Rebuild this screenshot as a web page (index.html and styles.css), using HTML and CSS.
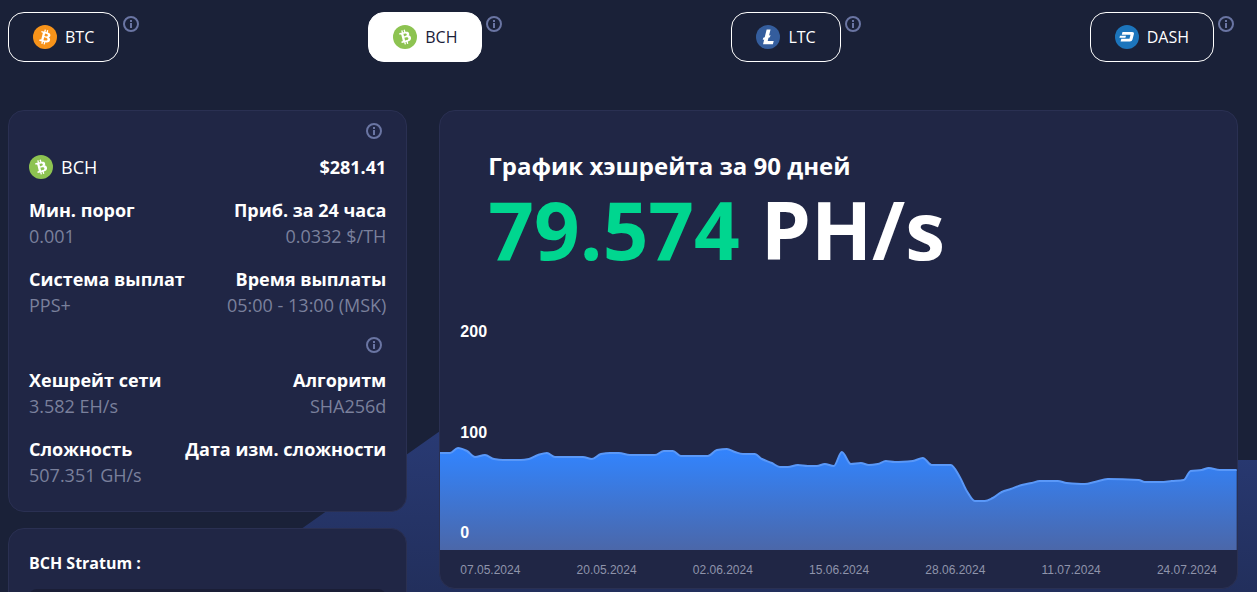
FILE: index.html
```html
<!DOCTYPE html>
<html lang="ru">
<head>
  <meta charset="UTF-8">
  <title>BCH Pool</title>
  <meta name="viewport" content="width=device-width, initial-scale=1.0">
  <link rel="stylesheet" href="styles.css">
</head>
<body>
<svg class="sprite" aria-hidden="true">
  <symbol id="info" viewBox="0 0 16 16">
    <circle cx="8" cy="8" r="7" fill="none" stroke="currentColor" stroke-width="2"/>
    <path fill="currentColor" d="M7 4h2v2H7zM7 7h2v5H7z"/>
  </symbol>
  <symbol id="bitcoin" viewBox="0 0 32 32">
    <path fill="#fff" fill-rule="evenodd" d="M23.189 14.02c.314-2.096-1.283-3.223-3.465-3.975l.708-2.84-1.728-.43-.69 2.765c-.454-.114-.92-.22-1.385-.326l.695-2.783L15.596 6l-.708 2.839c-.376-.086-.746-.17-1.104-.26l.002-.009-2.384-.595-.46 1.846s1.283.294 1.256.312c.7.175.826.638.805 1.006l-.806 3.235c.048.012.11.03.18.057l-.183-.045-1.13 4.532c-.086.212-.303.531-.793.41.018.025-1.256-.313-1.256-.313l-.858 1.978 2.25.561c.418.105.828.215 1.231.318l-.715 2.872 1.727.43.708-2.84c.472.127.93.245 1.378.357l-.706 2.828 1.728.43.715-2.866c2.948.558 5.164.333 6.097-2.333.752-2.146-.037-3.385-1.588-4.192 1.13-.26 1.98-1.003 2.207-2.538zm-3.95 5.538c-.533 2.147-4.148.986-5.32.695l.95-3.805c1.172.293 4.929.872 4.37 3.11zm.535-5.569c-.487 1.953-3.495.96-4.47.717l.86-3.45c.975.243 4.118.696 3.61 2.733z"/>
  </symbol>
  <symbol id="btc" viewBox="0 0 32 32">
    <circle cx="16" cy="16" r="16" fill="#f7931a"/>
    <use href="#bitcoin" width="32" height="32"/>
  </symbol>
  <symbol id="bch" viewBox="0 0 32 32">
    <circle cx="16" cy="16" r="16" fill="#8dc351"/>
    <use href="#bitcoin" width="32" height="32" transform="rotate(-28 16 16)"/>
  </symbol>
  <symbol id="ltc" viewBox="0 0 32 32">
    <circle cx="16" cy="16" r="16" fill="#345d9d"/>
    <path fill="#fff" d="M10.9 19.2l-1.9.7.7-2.9 1.9-.7L14.2 6h5.2l-2 8 1.9-.7-.7 2.9-1.9.7-1.1 4.4h8l-1.1 4.2H9.4z"/>
  </symbol>
  <symbol id="dash" viewBox="0 0 24 24">
    <circle cx="12" cy="12" r="12" fill="#1c75bc"/>
    <path fill="#fff" d="M7.5 7H17q2.4 0 1.9 2l-1.4 5.5q-.6 2-2.6 2H5.6l.7-2.7h8.2l1-4.1H6.8zM5 10.7h6l-.6 2H4.4z"/>
  </symbol>
</svg>

<main class="page">
  <nav class="coins">
    <div class="coin">
      <button class="coin-btn" type="button"><svg class="logo"><use href="#btc"/></svg>BTC</button>
      <svg class="info"><use href="#info"/></svg>
    </div>
    <div class="coin">
      <button class="coin-btn active" type="button"><svg class="logo"><use href="#bch"/></svg>BCH</button>
      <svg class="info"><use href="#info"/></svg>
    </div>
    <div class="coin">
      <button class="coin-btn" type="button"><svg class="logo"><use href="#ltc"/></svg>LTC</button>
      <svg class="info"><use href="#info"/></svg>
    </div>
    <div class="coin">
      <button class="coin-btn" type="button"><svg class="logo"><use href="#dash"/></svg>DASH</button>
      <svg class="info"><use href="#info"/></svg>
    </div>
  </nav>

  <div class="content">
    <div class="side">
      <section class="card stats">
        <svg class="info"><use href="#info"/></svg>
        <div class="row price">
          <span class="name"><svg class="logo"><use href="#bch"/></svg>BCH</span>
          <b>$281.41</b>
        </div>
        <div class="row">
          <div><b>Мин. порог</b><p>0.001</p></div>
          <div><b>Приб. за 24 часа</b><p>0.0332 $/TH</p></div>
        </div>
        <div class="row">
          <div><b>Система выплат</b><p>PPS+</p></div>
          <div><b>Время выплаты</b><p>05:00 - 13:00 (MSK)</p></div>
        </div>
        <svg class="info second"><use href="#info"/></svg>
        <div class="row network">
          <div><b>Хешрейт сети</b><p>3.582 EH/s</p></div>
          <div><b>Алгоритм</b><p>SHA256d</p></div>
        </div>
        <div class="row">
          <div><b>Сложность</b><p>507.351 GH/s</p></div>
          <div><b>Дата изм. сложности</b></div>
        </div>
      </section>

      <section class="card stratum">
        <label for="stratum">BCH Stratum :</label>
        <input id="stratum" type="text" readonly>
      </section>
    </div>

    <section class="card hashrate">
      <h2>График хэшрейта за 90 дней</h2>
      <p class="total"><span>79.574</span> PH/s</p>
      <div class="chart">
        <svg viewBox="0 0 797 230" preserveAspectRatio="none">
          <defs>
            <linearGradient id="fill" gradientUnits="userSpaceOnUse" x1="0" y1="128" x2="0" y2="230">
              <stop offset="0" stop-color="#3284ff"/>
              <stop offset="0.2" stop-color="#367fef"/>
              <stop offset="1" stop-color="#4b67a9"/>
            </linearGradient>
          </defs>
          <path id="area" fill="url(#fill)"/>
          <path id="line" fill="none" stroke="#5a98f8" stroke-width="2"/>
        </svg>
        <div class="levels"><span>200</span><span>100</span><span>0</span></div>
      </div>
      <div class="dates">
        <span>07.05.2024</span>
        <span>20.05.2024</span>
        <span>02.06.2024</span>
        <span>15.06.2024</span>
        <span>28.06.2024</span>
        <span>11.07.2024</span>
        <span>24.07.2024</span>
      </div>
    </section>
  </div>
</main>

<script>
  const points = [
    [0, 133], [10, 133], [18, 128], [27, 131], [35, 137], [45, 135], [54, 139], [63, 140],
    [72, 140], [81, 140], [89, 139], [98, 135], [107, 133], [115, 137], [126, 137], [143, 137],
    [152, 139], [161, 134], [170, 133], [179, 133], [190, 135], [200, 135], [215, 135], [224, 131],
    [233, 131], [241, 136], [260, 136], [268, 136], [277, 130], [287, 129], [295, 132], [303, 134],
    [315, 134], [322, 139], [332, 143], [340, 147], [348, 147], [358, 145], [368, 146], [377, 146],
    [385, 144], [394, 146], [402, 132], [411, 144], [421, 143], [429, 145], [438, 144], [446, 141],
    [455, 142], [473, 141], [483, 138], [492, 145], [511, 145], [520, 157], [527, 171], [535, 181],
    [545, 181], [553, 178], [562, 172], [571, 169], [582, 165], [592, 163], [600, 161], [618, 161],
    [627, 163], [645, 164], [655, 162], [668, 159], [699, 160], [705, 162], [721, 162], [732, 161],
    [744, 160], [751, 151], [762, 150], [769, 148], [780, 150], [797, 150]
  ];

  // slope is flat at every peak, so the curve never overshoots
  function slope(i) {
    if (i === 0 || i === points.length - 1) return 0;
    const [a, b, c] = [points[i - 1], points[i], points[i + 1]];
    const left = (b[1] - a[1]) / (b[0] - a[0]);
    const right = (c[1] - b[1]) / (c[0] - b[0]);
    return left * right <= 0 ? 0 : 2 * left * right / (left + right);
  }

  let path = `M${points[0]}`;
  for (let i = 1; i < points.length; i++) {
    const [x0, y0] = points[i - 1], [x1, y1] = points[i];
    const step = (x1 - x0) / 3;
    path += `C${x0 + step} ${y0 + slope(i - 1) * step} ${x1 - step} ${y1 - slope(i) * step} ${x1} ${y1}`;
  }
  document.getElementById("line").setAttribute("d", path);
  document.getElementById("area").setAttribute("d", path + "V230H0Z");
</script>
</body>
</html>
```
FILE: styles.css
```css
* { box-sizing: border-box; margin: 0; padding: 0; }
html { overflow: hidden; }
body {
  position: relative;
  z-index: 0;
  font-family: "Open Sans", "Noto Sans", sans-serif;
  font-size: 18px;
  line-height: 26px;
  color: #fff;
  background: #1a2138;
  height: 100vh;
  overflow: hidden;
}
body::before {
  content: "";
  position: absolute;
  z-index: -1;
  top: 400px;
  left: 212px;
  right: 0;
  height: 192px;
  background: linear-gradient(#2a3c78, #222f5c);
  clip-path: polygon(0 100%, 272px 0, 600px 60px, 100% 60px, 100% 100%);
}
.sprite {
  position: absolute;
  width: 0;
  height: 0;
}
.page {
  padding: 12px 19px 0 8px;
}
.info {
  display: block;
  flex: none;
  width: 16px;
  height: 16px;
  color: #6a75a3;
}
.logo {
  flex: none;
  width: 24px;
  height: 24px;
}

.coins {
  display: flex;
  justify-content: space-between;
  padding-right: 4px;
  margin-bottom: 48px;
}
.coin {
  display: flex;
  gap: 4px;
}
.coin .info {
  margin-top: 4px;
}
.coin-btn {
  display: flex;
  align-items: center;
  gap: 8px;
  height: 50px;
  padding: 0 24px;
  font: inherit;
  font-size: 16px;
  color: #fff;
  background: transparent;
  border: 1px solid #fff;
  border-radius: 16px;
  cursor: pointer;
}
.coin-btn.active {
  color: #1a2138;
  background: #fff;
}

.content {
  display: grid;
  grid-template-columns: 1fr 2fr;
  align-items: start;
  gap: 32px;
}
.side {
  display: grid;
  gap: 16px;
}
.card {
  background: #202645;
  border: 1px solid #2a3052;
  border-radius: 16px;
}
.stats {
  padding: 12px 20px 23px;
}
.stats .info {
  margin: 0 4px 0 auto;
}
.stats .second {
  margin-top: 19px;
}
.row {
  display: flex;
  justify-content: space-between;
  margin-top: 17px;
}
.row div:last-child {
  text-align: right;
}
.row div:last-child b {
  white-space: nowrap;
}
.row p {
  color: #7a809c;
}
.price {
  margin-top: 15px;
}
.network {
  margin-top: 14px;
}
.name {
  display: flex;
  align-items: center;
  gap: 8px;
}
.stratum {
  padding: 21px 20px;
}
.stratum label {
  display: block;
  font-size: 16px;
  font-weight: bold;
}
.stratum input {
  width: 100%;
  height: 48px;
  margin-top: 13px;
  color: #fff;
  background: #1a1e36;
  border: none;
  border-radius: 8px;
}

.hashrate {
  overflow: hidden;
}
.hashrate h2 {
  padding: 38px 48px 0;
  font-size: 24px;
  line-height: 34px;
}
.total {
  padding: 0 48px;
  margin-bottom: 46px;
  font-size: 80px;
  font-weight: bold;
  line-height: 91px;
}
.total span {
  color: #00d68f;
}
.chart {
  position: relative;
  height: 230px;
}
.chart svg {
  display: block;
  width: 100%;
  height: 100%;
}
.levels {
  position: absolute;
  inset: 0;
  display: flex;
  flex-direction: column;
  justify-content: space-between;
  padding: 2px 20px 7px;
  font: bold 16px/20px "Liberation Sans", Arial, sans-serif;
}
.dates {
  display: flex;
  justify-content: space-between;
  padding: 10px 20px 8px;
  font: 12px/20px "Liberation Sans", Arial, sans-serif;
  color: #8f94ab;
}
```
